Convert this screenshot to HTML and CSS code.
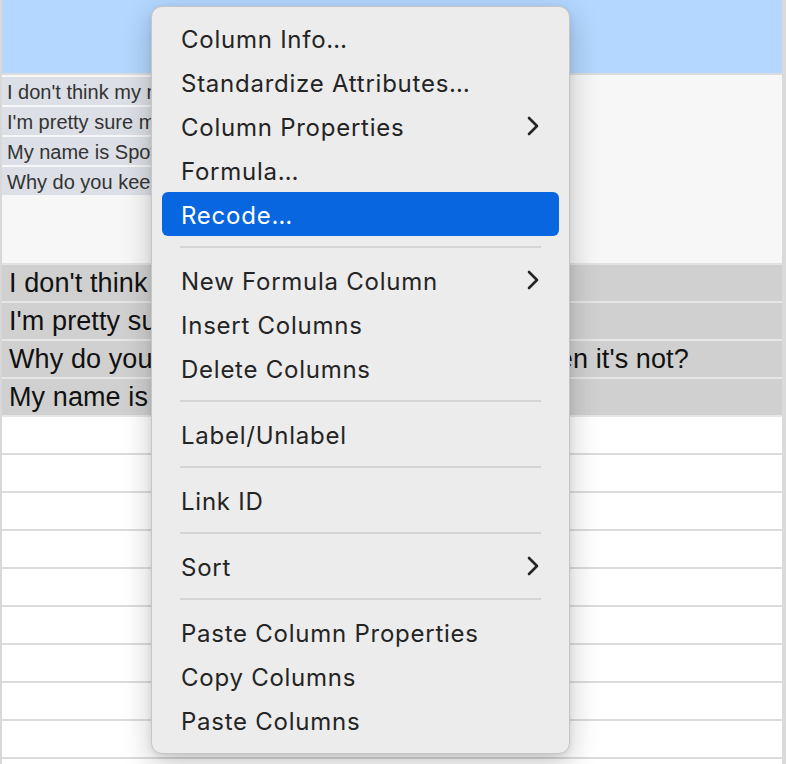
FILE: index.html
```html
<!DOCTYPE html>
<html lang="en">
<head>
  <meta charset="UTF-8">
  <title>Column menu</title>
  <link rel="stylesheet" href="styles.css">
</head>
<body>
  <div class="sheet">
    <div class="column">
      <div class="column-head"></div>
      <div class="cell-list">
        <div class="list-item">I don't think my name is Spot.</div>
        <div class="list-item">I'm pretty sure my name is Max.</div>
        <div class="list-item">My name is Spot.</div>
        <div class="list-item">Why do you keep calling me Spot?</div>
      </div>
      <div class="row filled">I don't think my name is Spot.</div>
      <div class="row filled">I'm pretty sure my name is Max.</div>
      <div class="row filled">Why do you keep saying my name is Spot when it's not?</div>
      <div class="row filled">My name is Spot.</div>
      <div class="row"></div>
      <div class="row"></div>
      <div class="row"></div>
      <div class="row"></div>
      <div class="row"></div>
      <div class="row"></div>
      <div class="row"></div>
      <div class="row"></div>
      <div class="row"></div>
    </div>
    <div class="next-column"></div>
  </div>

  <div class="context-menu">
    <div class="menu-item">Column Info…</div>
    <div class="menu-item">Standardize Attributes…</div>
    <div class="menu-item has-sub">Column Properties
      <svg class="chevron" viewBox="0 0 12 20"><path d="M2 2 L10 10 L2 18"/></svg>
    </div>
    <div class="menu-item">Formula…</div>
    <div class="menu-item selected">Recode…</div>
    <div class="menu-sep"></div>
    <div class="menu-item has-sub">New Formula Column
      <svg class="chevron" viewBox="0 0 12 20"><path d="M2 2 L10 10 L2 18"/></svg>
    </div>
    <div class="menu-item">Insert Columns</div>
    <div class="menu-item">Delete Columns</div>
    <div class="menu-sep"></div>
    <div class="menu-item">Label/Unlabel</div>
    <div class="menu-sep"></div>
    <div class="menu-item">Link ID</div>
    <div class="menu-sep"></div>
    <div class="menu-item has-sub">Sort
      <svg class="chevron" viewBox="0 0 12 20"><path d="M2 2 L10 10 L2 18"/></svg>
    </div>
    <div class="menu-sep"></div>
    <div class="menu-item">Paste Column Properties</div>
    <div class="menu-item">Copy Columns</div>
    <div class="menu-item">Paste Columns</div>
  </div>
</body>
</html>
```

FILE: styles.css
```css
body {
  margin: 0;
  padding: 0;
  background-color: #FFFFFF;
  font-family: 'Liberation Sans', 'Arial', sans-serif;
  overflow: hidden;
}
.sheet {
  display: flex;
  border-left: 2px solid #D8D8D8;
  height: 764px;
}
.column {
  width: 780px;
  overflow: hidden;
}
.next-column {
  width: 4px;
  background-color: #DADADA;
}
.column-head {
  height: 73px;
  background-color: #B3D7FF;
  border-bottom: 2px solid #DCDCDC;
}
.cell-list {
  height: 186px;
  padding-top: 2px;
  background-color: #F7F7F7;
  border-bottom: 2px solid #E2E2E2;
}
.list-item {
  width: 320px;
  height: 28px;
  line-height: 30px;
  margin-bottom: 2px;
  padding-left: 5px;
  background-color: #DCDFE5;
  color: #333333;
  font-size: 20px;
  white-space: nowrap;
  overflow: hidden;
}
.row {
  height: 36px;
  line-height: 37px;
  padding-left: 7px;
  border-bottom: 2px solid #DCDCDC;
  font-size: 27px;
  letter-spacing: 0.1px;
  color: #111111;
  white-space: nowrap;
}
.row.filled {
  background-color: #D0D0D0;
  border-bottom-color: #E6E6E6;
}

/* context menu sits over the sheet */
.context-menu {
  position: absolute;
  left: 151px;
  top: 6px;
  width: 397px;
  padding: 9px 10px 11px 10px;
  background-color: #ECECEC;
  border: 1px solid #C6C6C6;
  border-radius: 11px;
  box-shadow: 0 10px 30px rgba(0,0,0,0.22), 0 2px 6px rgba(0,0,0,0.08);
  font-family: 'Inter', 'Noto Sans', sans-serif;
  font-size: 24px;
  letter-spacing: 0.75px;
  color: #242424;
}
.menu-item {
  position: relative;
  height: 44px;
  line-height: 47px;
  padding-left: 19px;
  border-radius: 6px;
  white-space: nowrap;
}
.menu-item.selected {
  background-color: #0766E0;
  color: #FFFFFF;
}
.chevron {
  position: absolute;
  right: 20px;
  top: 12px;
  width: 12px;
  height: 20px;
  fill: none;
  stroke: #242424;
  stroke-width: 2.6;
  stroke-linecap: round;
  stroke-linejoin: round;
}
.menu-sep {
  height: 2px;
  margin: 10px 18px;
  background-color: #D4D4D4;
}
```
